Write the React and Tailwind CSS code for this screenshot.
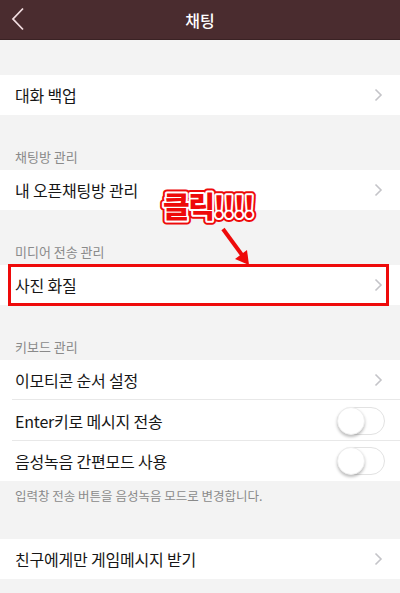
import React from 'react';

const font = { fontFamily: '"Noto Sans CJK KR", "Noto Sans", sans-serif' };

function Chevron() {
  return (
    <svg width="9" height="14" viewBox="0 0 9 14" className="shrink-0">
      <path d="M1.5 1.5 L7 7 L1.5 12.5" fill="none" stroke="#c4c4c8" strokeWidth="1.6" />
    </svg>
  );
}

function Toggle() {
  return (
    <div className="relative w-[48px] h-[28px] rounded-full border border-[#e2e2e2] bg-white">
      <div className="absolute left-[-1px] top-[-1px] w-[28px] h-[28px] rounded-full bg-white shadow-[0_2px_3px_rgba(0,0,0,0.25)] border border-[#eeeeee]" />
    </div>
  );
}

function Row({ label, right = 'chevron', divider = false }) {
  return (
    <div className="relative flex items-center h-[40px] pl-[15px] pr-[17px] bg-white">
      <span className="flex-1 text-[16px] text-[#161616] tracking-[-0.2px]">{label}</span>
      {right === 'chevron' ? <Chevron /> : <div className="mr-[-2px]"><Toggle /></div>}
      {divider && <div className="absolute left-[12px] right-0 bottom-0 h-px bg-[#e8e8e8]" />}
    </div>
  );
}

function SectionLabel({ children }) {
  return (
    <div className="pt-[33px] pb-[4px] pl-[15px] h-[55px] text-[13px] leading-[18px] text-[#8a8a8a]">
      {children}
    </div>
  );
}

export default function App() {
  return (
    <div style={font} className="relative w-[400px] h-[593px] overflow-hidden bg-[#f3f3f3]">
      <div className="relative flex items-center justify-center h-[40px] bg-[#4a2c2f] border-b border-[#3a2224]">
        <svg width="14" height="24" viewBox="0 0 14 24" className="absolute left-[11px] top-[7px]">
          <path d="M12 1.5 L2 12 L12 22.5" fill="none" stroke="#f1dde0" strokeWidth="1.8" />
        </svg>
        <span className="text-[16px] text-white font-medium">채팅</span>
      </div>

      <div className="h-[35px]" />
      <Row label="대화 백업" />

      <SectionLabel>채팅방 관리</SectionLabel>
      <Row label="내 오픈채팅방 관리" />

      <SectionLabel>미디어 전송 관리</SectionLabel>
      <div className="relative">
        <Row label="사진 화질" />
        <div className="absolute left-[8px] right-[11px] top-[-1px] bottom-[-1px] border-[3px] border-[#ee0a0a]" />
      </div>

      <SectionLabel>키보드 관리</SectionLabel>
      <Row label="이모티콘 순서 설정" divider />
      <div className="h-px bg-white" />
      <Row label="Enter키로 메시지 전송" right="toggle" divider />
      <Row label="음성녹음 간편모드 사용" right="toggle" />
      <div className="h-[58px] pt-[6px] pl-[15px] text-[12.5px] leading-[18px] text-[#8a8a8a]">
        입력창 전송 버튼을 음성녹음 모드로 변경합니다.
      </div>
      <Row label="친구에게만 게임메시지 받기" />

      <svg width="120" height="90" viewBox="0 0 120 90" className="absolute left-[150px] top-[182px]">
        <g fontSize="29" fontWeight="900" fontFamily='"Noto Sans CJK KR", sans-serif' letterSpacing="-1.5">
          <text x="13" y="36" fill="none" stroke="#ee0a0a" strokeWidth="8" strokeLinejoin="round">클릭!!!!</text>
          <text x="13" y="36" fill="none" stroke="#ffffff" strokeWidth="4" strokeLinejoin="round">클릭!!!!</text>
          <text x="13" y="36" fill="#ee0a0a">클릭!!!!</text>
        </g>
        <line x1="73" y1="47" x2="95" y2="77" stroke="#ee0a0a" strokeWidth="4" />
        <path d="M99 83 L85 77 L97 68 Z" fill="#ee0a0a" />
      </svg>
    </div>
  );
}
